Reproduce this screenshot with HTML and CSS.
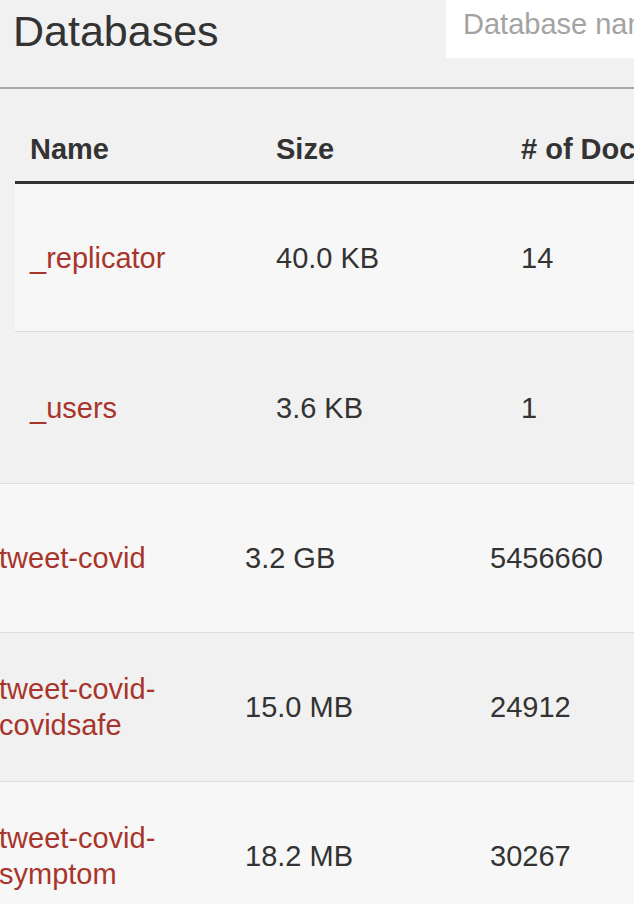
FILE: index.html
```html
<!DOCTYPE html>
<html lang="en">
<head>
<meta charset="utf-8">
<title>Databases</title>
<link rel="stylesheet" href="styles.css">
</head>
<body>
<div class="page">
  <header class="topbar">
    <h1 class="title">Databases</h1>
    <div class="search">
      <input class="search-input" type="text" placeholder="Database name">
    </div>
  </header>

  <div class="dbtable group-a">
    <div class="row head">
      <div class="cell">Name</div>
      <div class="cell">Size</div>
      <div class="cell"># of Docs</div>
    </div>
    <div class="row light first">
      <div class="cell"><a class="dblink" href="#">_replicator</a></div>
      <div class="cell">40.0 KB</div>
      <div class="cell">14</div>
    </div>
    <div class="row plain tall">
      <div class="cell"><a class="dblink" href="#">_users</a></div>
      <div class="cell">3.6 KB</div>
      <div class="cell">1</div>
    </div>
  </div>

  <div class="dbtable group-b">
    <div class="row light">
      <div class="cell"><a class="dblink" href="#">tweet-covid</a></div>
      <div class="cell">3.2 GB</div>
      <div class="cell">5456660</div>
    </div>
    <div class="row plain">
      <div class="cell"><a class="dblink" href="#">tweet-covid-covidsafe</a></div>
      <div class="cell">15.0 MB</div>
      <div class="cell">24912</div>
    </div>
    <div class="row light">
      <div class="cell"><a class="dblink" href="#">tweet-covid-symptom</a></div>
      <div class="cell">18.2 MB</div>
      <div class="cell">30267</div>
    </div>
  </div>
</div>
</body>
</html>
```

FILE: styles.css
```css
html, body {
  margin: 0;
  padding: 0;
  overflow: hidden;
  background: #f1f1f1;
}

body {
  font-family: "Liberation Sans", Arial, Helvetica, sans-serif;
  color: #333333;
}

.page {
  width: 634px;
  height: 904px;
  overflow: hidden;
}

.topbar {
  display: grid;
  grid-template-columns: 446px 320px;
  height: 87px;
  border-bottom: 2px solid #a9a9a9;
}

.title {
  margin: 10px 0 0 13px;
  font-size: 43px;
  line-height: 43px;
  font-weight: normal;
  color: #333333;
}

.search {
  height: 58px;
}

.search-input {
  box-sizing: border-box;
  width: 100%;
  height: 58px;
  margin: 0;
  border: none;
  outline: none;
  background: #ffffff;
  padding: 0 0 9px 17px;
  font-family: "Liberation Sans", Arial, Helvetica, sans-serif;
  font-size: 29px;
  color: #333333;
}

.search-input::placeholder {
  color: #a3a3a3;
  opacity: 1;
}

.dbtable {
  width: 760px;
}

.group-a {
  margin-left: 15px;
}

.group-b {
  margin-left: -16px;
  border-top: 1px solid #dddddd;
}

.row {
  display: grid;
  grid-template-columns: 246px 245px 269px;
  align-items: center;
  font-size: 29px;
  line-height: 36px;
  height: 148px;
  border-bottom: 1px solid #dddddd;
}

.row.first {
  height: 147px;
}

.row.tall {
  height: 151px;
  border-bottom: none;
}

.row.head {
  height: 92px;
  align-items: end;
  font-weight: bold;
  border-bottom: 3px solid #333333;
}

.row.head .cell {
  padding-bottom: 14px;
}

.row.light {
  background: #f7f7f7;
}

.row.plain {
  background: transparent;
}

.cell {
  padding: 0 15px;
  white-space: normal;
}

.dblink {
  color: #a8352b;
  text-decoration: none;
}
```
